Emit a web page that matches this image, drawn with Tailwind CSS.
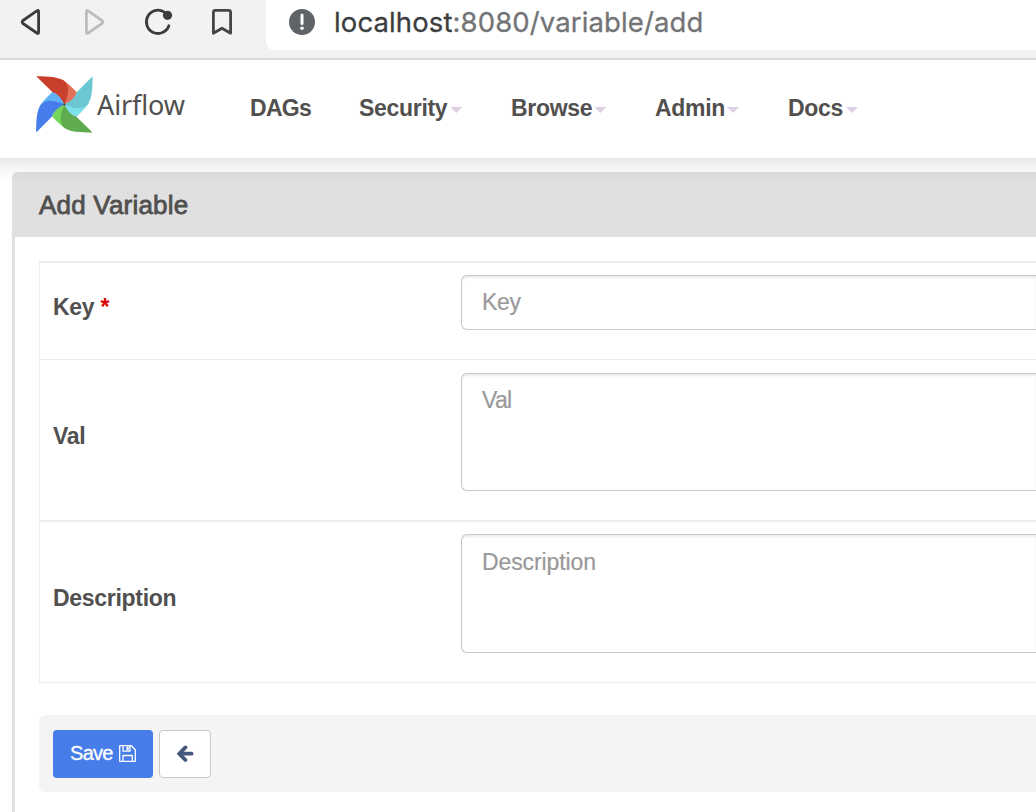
<!DOCTYPE html>
<html lang="en">
<head>
<meta charset="utf-8">
<title>Add Variable - Airflow</title>
<script src="https://cdn.jsdelivr.net/npm/@tailwindcss/browser@4"></script>
</head>
<body class="w-[1036px] h-[812px] overflow-hidden bg-white font-['Liberation_Sans',Arial,sans-serif] text-[#51504f]">
<header class="relative z-20 flex h-[60px] border-b-2 border-[#d5d8dc] bg-[#f2f2f2]">
  <div class="flex w-[266px] shrink-0">
    <svg class="w-[266px] h-[58px]" viewBox="0 0 266 58" fill="none" stroke="#3b3c3e" stroke-width="2.8" stroke-linejoin="round" stroke-linecap="round">
      <path d="M38.600 11.600V32.200Q38.600 34.200 36.800 33L23 23.500Q21.300 22 23 20.500L36.800 10.800Q38.600 9.600 38.600 11.600Z"/>
      <path stroke="#bdbdbd" d="M86.400 11.600V32.200Q86.400 34.200 88.200 33L102 23.500Q103.700 22 102 20.500L88.200 10.800Q86.400 9.600 86.400 11.600Z"/>
      <path d="M164 11.900A11.600 11.600 0 1 0 168.900 25.800"/>
      <circle cx="167.500" cy="15.300" r="4.600" fill="#3b3c3e" stroke="none"/>
      <path stroke="#444547" d="M213.400 12.400Q213.400 10.400 215.400 10.400H228.600Q230.600 10.400 230.600 12.400V33.200L222 28.200L213.400 33.200Z"/>
    </svg>
  </div>
  <div class="flex h-[50px] flex-1 rounded-bl-lg bg-white pl-[23px]">
    <svg class="mt-[9px] h-[26px] w-[26px]" viewBox="0 0 26 26"><circle cx="13" cy="13" r="13" fill="#5f6368"/><path d="M13 6v8.500" stroke="#fff" stroke-width="3" stroke-linecap="round"/><circle cx="13" cy="19.300" r="1.800" fill="#fff"/></svg>
    <div class="ml-[19px] mt-[4px] whitespace-nowrap font-['Inter',sans-serif] text-[27.500px] leading-[36px] tracking-[0.120px] text-[#737476] [-webkit-text-stroke:0.300px_currentColor]"><span class="text-[#3c3d3f]">localhost</span>:8080/variable/add</div>
  </div>
</header>
<nav class="relative z-10 flex h-[98px] bg-white pl-[36px]">
  <div class="absolute -left-10 -right-10 inset-y-0 -z-10 bg-white shadow-[0_0_24px_rgba(0,0,0,0.2)]"></div>
  <svg class="mt-4 h-[57px] w-[57px] shrink-0" viewBox="0 0 57 57">
    <g>
      <path fill="#e36f58" d="M27 4Q32 7 40.500 16Q41.500 17.500 40 18.800Q36.500 26 28.400 28.400L26 20Z"/>
      <path fill="#62b2f8" d="M4 29.800Q7 24.800 16 16.300Q17.500 15.300 18.800 16.800Q26 20.300 28.400 28.400L20 30.800Z"/>
      <path fill="#76d65b" d="M29.800 52.800Q24.800 49.800 16.300 40.800Q15.300 39.300 16.800 38Q20.300 30.800 28.400 28.400L30.800 36.800Z"/>
      <path fill="#7fe0ed" d="M52.800 27Q49.800 32 40.800 40.500Q39.300 41.500 38 40Q30.800 36.500 28.400 28.400L36.800 26Z"/>
    </g>
    <path fill="#c8402b" d="M.2.200C14 .2 22 1 27.700 4.500Q36 11 28.400 28.400Q24.500 20 18.500 16.800Q17 16.800 15.800 15.600Z"/>
    <path fill="#6cc7d2" transform="rotate(90 28.400 28.400)" d="M.2.200C14 .2 22 1 27.700 4.500Q36 11 28.400 28.400Q24.500 20 18.500 16.800Q17 16.800 15.800 15.600Z"/>
    <path fill="#60ab50" transform="rotate(180 28.400 28.400)" d="M.2.200C14 .2 22 1 27.700 4.500Q36 11 28.400 28.400Q24.500 20 18.500 16.800Q17 16.800 15.800 15.600Z"/>
    <path fill="#477deb" transform="rotate(270 28.400 28.400)" d="M.2.200C14 .2 22 1 27.700 4.500Q36 11 28.400 28.400Q24.500 20 18.500 16.800Q17 16.800 15.800 15.600Z"/>
    <circle cx="28.400" cy="28.400" r="1.200" fill="#465057"/>
  </svg>
  <div class="ml-[4px] mt-[27px] w-[153px] shrink-0 font-['Noto_Sans',sans-serif] text-[27px] leading-[36px] tracking-[-0.100px]">Airflow</div>
  <div class="flex pt-[34px] text-[23px] font-bold leading-[28px] tracking-[-0.300px]">
    <div class="w-[109px] tracking-[-0.700px]">DAGs</div>
    <div class="flex w-[152px]">Security<i class="ml-[3px] mt-[13px] h-[6px] w-[12px] bg-[#ddd0e2] [clip-path:polygon(0_0,100%_0,50%_100%)]"></i></div>
    <div class="flex w-[144px]">Browse<i class="ml-[2px] mt-[13px] h-[6px] w-[12px] bg-[#ddd0e2] [clip-path:polygon(0_0,100%_0,50%_100%)]"></i></div>
    <div class="flex w-[133px]">Admin<i class="ml-[2px] mt-[13px] h-[6px] w-[12px] bg-[#ddd0e2] [clip-path:polygon(0_0,100%_0,50%_100%)]"></i></div>
    <div class="flex">Docs<i class="ml-[3px] mt-[13px] h-[6px] w-[12px] bg-[#ddd0e2] [clip-path:polygon(0_0,100%_0,50%_100%)]"></i></div>
  </div>
</nav>
<main class="ml-3 mt-[14px] h-[640px] rounded-tl-[6px] border-l-[3px] border-[#e0e0e0]">
  <h1 class="-ml-[3px] h-[65px] rounded-tl-[6px] bg-[#e0e0e0] pl-[27px] pt-[17px] text-[26px] leading-[32px] tracking-[0.200px] [-webkit-text-stroke:0.800px_#51504f]">Add Variable</h1>
  <form class="pl-6 pt-6">
    <div class="border-b border-l border-[#ededed] text-[23px]">
      <div class="flex h-[98px] border-t-2 border-[#ededed]">
        <label class="w-[421px] shrink-0 pl-[13px] pt-[30px] font-bold leading-[28px] tracking-[-0.300px]">Key <span class="text-[#e00000]">*</span></label>
        <div class="mt-3 h-[55px] flex-1 rounded-l-[6px] border border-r-0 border-[#c8c8c8] pl-[20px] pt-[12px] leading-[28px] tracking-[-0.300px] text-[#999] shadow-[inset_0_2px_2px_rgba(0,0,0,0.075)] [-webkit-text-stroke:0.200px_#999]">Key</div>
      </div>
      <div class="flex h-[161px] border-t border-[#ededed]">
        <label class="w-[421px] shrink-0 pl-[13px] pt-[62px] font-bold leading-[28px] tracking-[-0.300px]">Val</label>
        <div class="mt-[13px] h-[118px] flex-1 rounded-l-[6px] border border-r-0 border-[#c8c8c8] pl-[20px] pt-[12px] leading-[28px] tracking-[-0.700px] text-[#999] shadow-[inset_0_2px_2px_rgba(0,0,0,0.075)] [-webkit-text-stroke:0.200px_#999]">Val</div>
      </div>
      <div class="flex h-[162px] border-t-2 border-[#ededed]">
        <label class="w-[421px] shrink-0 pl-[13px] pt-[62px] font-bold leading-[28px] tracking-[-0.300px]">Description</label>
        <div class="mt-3 h-[119px] flex-1 rounded-l-[6px] border border-r-0 border-[#c8c8c8] pl-[20px] pt-[13px] leading-[28px] tracking-[-0.100px] text-[#999] shadow-[inset_0_2px_2px_rgba(0,0,0,0.075)] [-webkit-text-stroke:0.200px_#999]">Description</div>
      </div>
    </div>
    <div class="mt-8 flex h-[77px] gap-[6px] rounded-l-[6px] bg-[#f4f4f4] pl-[14px] pt-[15px]">
      <button type="button" class="flex h-12 w-[100px] rounded-[4px] bg-[#467de9] pl-[17px] pt-[9px] text-[20px] leading-[28px] tracking-[-0.700px] text-white [-webkit-text-stroke:0.300px_white]">Save
        <svg class="ml-auto mr-[17px] mt-[6px] h-[17px] w-[17px] shrink-0" viewBox="0 0 17 17" fill="none" stroke="#fff" stroke-width="1.300" stroke-linejoin="round"><path d="M.7.700H12.300L16.300 4.700V16.300H.7ZM4 .700V6.200H11V.700M4 16.300V10.500H13.300V16.300"/><path fill="#fff" stroke="none" d="M7.500 1.500H9.700V5.200H7.500Z"/></svg>
      </button>
      <button type="button" class="flex h-12 w-[52px] items-center justify-center rounded-[4px] border border-[#c8c8c8] bg-white"><svg class="h-[18px] w-[18px]" viewBox="0 0 18 18" fill="none" stroke="#45597c" stroke-width="3.800" stroke-linejoin="miter"><path stroke-linecap="round" d="M9.400 2.400L3.300 8.700L9.400 15"/><path stroke-linecap="round" d="M4 8.700H15.600"/></svg></button>
    </div>
  </form>
</main>
</body>
</html>
